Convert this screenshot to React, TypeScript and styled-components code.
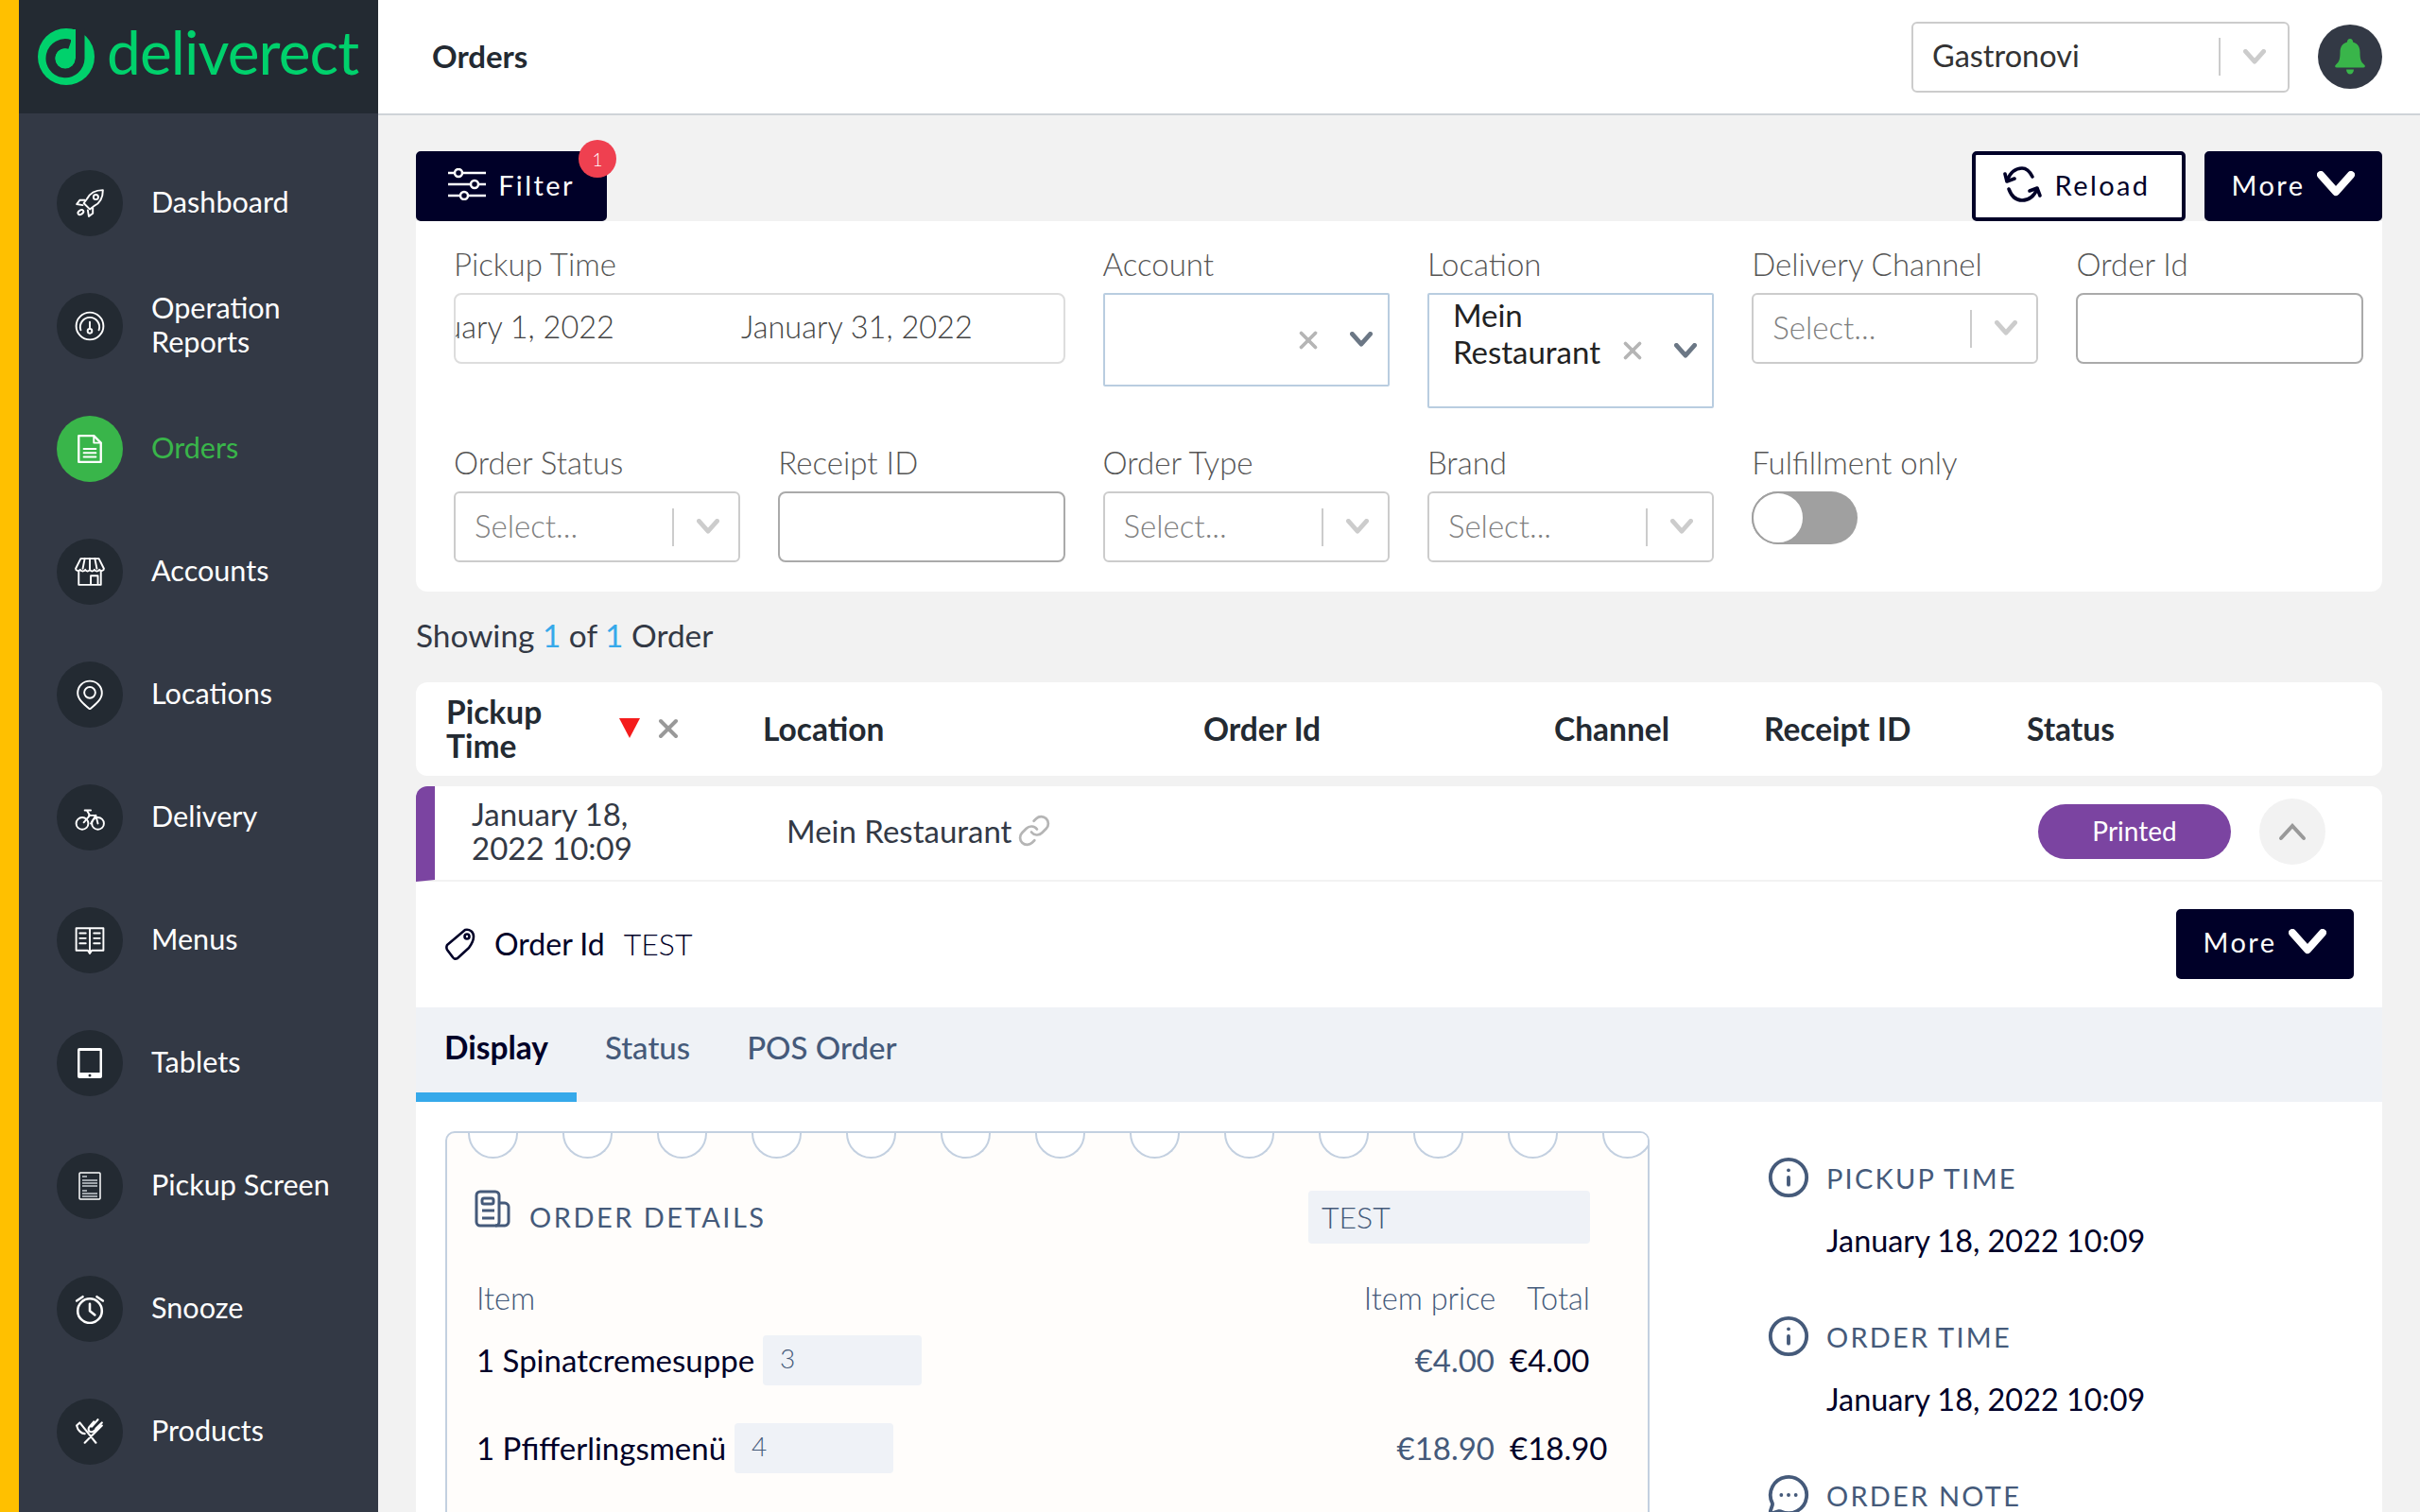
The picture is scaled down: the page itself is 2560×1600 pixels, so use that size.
import styled, { createGlobalStyle } from "styled-components";
import { Info, Link as LinkIcon, MessageCircleMore, X } from "lucide-react";

const GlobalStyle = createGlobalStyle`
  html, body {
    margin: 0;
    padding: 0;
    height: 100%;
    overflow: hidden;
    background: #f2f2f2;
    font-family: "Lato", "Noto Sans", sans-serif;
  }
  * {
    box-sizing: border-box;
  }
`;

const Shell = styled.div`
  display: flex;
  width: 2560px;
  height: 1600px;
  overflow: hidden;
`;

const Sidebar = styled.aside`
  width: 400px;
  flex-shrink: 0;
  background: #333945;
  border-left: 20px solid #ffc000;
`;

const LogoBar = styled.div`
  height: 120px;
  background: #232a32;
  display: flex;
  align-items: center;
  padding: 0 0 0 20px;
  gap: 13px;
`;

const LogoText = styled.span`
  font-size: 64px;
  line-height: 1;
  color: #00d16c;
  letter-spacing: -0.9px;
  margin-top: -10px;
`;

const Nav = styled.nav`
  display: flex;
  flex-direction: column;
  gap: 60px;
  padding: 60px 0 0 40px;
`;

const NavItem = styled.div<{ $active?: boolean }>`
  display: flex;
  align-items: center;
  gap: 30px;
  height: 70px;
  font-size: 30.6px;
  line-height: 36px;
  color: ${(props) => (props.$active ? "#39b54a" : "#ffffff")};
`;

const NavCircle = styled.div<{ $active?: boolean }>`
  width: 70px;
  height: 70px;
  border-radius: 50%;
  flex-shrink: 0;
  display: flex;
  align-items: center;
  justify-content: center;
  background: ${(props) => (props.$active ? "#39b54a" : "#232a32")};
`;

const NavLabel = styled.span`
  max-width: 200px;
  padding-bottom: 3px;
`;

const Main = styled.main`
  flex: 1;
  min-width: 0;
  display: flex;
  flex-direction: column;
`;

const TopBar = styled.header`
  height: 122px;
  flex-shrink: 0;
  background: #ffffff;
  border-bottom: 2px solid #cfd3d8;
  display: flex;
  align-items: center;
  padding: 0 40px 0 57px;
`;

const PageTitle = styled.h1`
  flex: 1;
  margin: 0 0 3px;
  font-size: 33px;
  font-weight: 700;
  color: #232a32;
`;

const AccountSelect = styled.div`
  width: 400px;
  height: 75px;
  border: 2px solid #cccccc;
  border-radius: 6px;
  background: #ffffff;
  display: flex;
  align-items: center;
  padding: 0 23px 0 20px;
  font-size: 32.5px;
  color: #333333;
  margin-right: 30px;
`;

const SelectText = styled.span<{ $muted?: boolean }>`
  flex: 1;
  min-width: 0;
  padding-bottom: 3px;
  color: ${(props) => (props.$muted ? "#808080" : "inherit")};
`;

const SelectDivider = styled.span`
  width: 2px;
  height: 40px;
  background: #cccccc;
  margin-right: 24px;
`;

const BellCircle = styled.div`
  width: 68px;
  height: 68px;
  border-radius: 50%;
  background: #333945;
  display: flex;
  align-items: center;
  justify-content: center;
`;

const Content = styled.div`
  padding: 38px 40px 0;
`;

const Toolbar = styled.div`
  display: flex;
  align-items: center;
  height: 74px;
  gap: 20px;
`;

const ToolButton = styled.button<{ $outline?: boolean; $width: number }>`
  width: ${(props) => props.$width}px;
  height: 74px;
  flex-shrink: 0;
  position: relative;
  display: flex;
  align-items: center;
  justify-content: center;
  gap: 13px;
  padding: ${(props) => (props.$outline ? "0 5px 4px 0" : "0 0 4px")};
  border-radius: 5px;
  border: 4px solid #000028;
  background: ${(props) => (props.$outline ? "#ffffff" : "#000028")};
  color: ${(props) => (props.$outline ? "#000028" : "#ffffff")};
  font-family: inherit;
  font-size: 29px;
  letter-spacing: 2.4px;
`;

const Spacer = styled.div`
  flex: 1;
`;

const Badge = styled.span`
  position: absolute;
  top: -16px;
  right: -14px;
  width: 40px;
  height: 40px;
  border-radius: 50%;
  background: #ef4050;
  color: #ffffff;
  font-size: 19px;
  font-weight: 300;
  letter-spacing: 0;
  display: flex;
  align-items: center;
  justify-content: center;
`;

const FilterPanel = styled.section`
  background: #ffffff;
  border-radius: 0 0 12px 12px;
  padding: 27px 21px 31px 40px;
  display: grid;
  grid-template-columns: repeat(6, 303.3px);
  column-gap: 40px;
  row-gap: 39px;
  align-items: start;
`;

const Field = styled.div<{ $wide?: boolean }>`
  grid-column: ${(props) => (props.$wide ? "span 2" : "span 1")};
`;

const FieldLabel = styled.div`
  height: 36px;
  margin-bottom: 13px;
  font-size: 33px;
  line-height: 36px;
  font-weight: 300;
  color: #555555;
  white-space: nowrap;
`;

const DateBox = styled.div`
  height: 75px;
  border: 2px solid #dddddd;
  border-radius: 8px;
  display: flex;
  align-items: center;
  overflow: hidden;
  font-size: 32.5px;
  font-weight: 300;
  color: #444444;
`;

const DateValue = styled.span`
  width: 302px;
  flex-shrink: 0;
  white-space: nowrap;
  padding-bottom: 4px;
  &:first-child {
    width: 360px;
    margin-left: -58px;
  }
`;

const SelectBox = styled.div<{ $height?: number; $focus?: boolean }>`
  height: ${(props) => props.$height ?? 75}px;
  border: 2px solid ${(props) => (props.$focus ? "#b9cde0" : "#cccccc")};
  border-radius: ${(props) => (props.$focus ? "2px" : "6px")};
  display: flex;
  align-items: center;
  padding: 0 ${(props) => (props.$focus ? "16px" : "20px")} 0 20px;
  font-size: 33px;
  font-weight: 300;
  color: #222222;
`;

const LocationText = styled.span`
  flex: 1;
  align-self: flex-start;
  padding: 2px 0 0 5px;
  line-height: 39px;
  font-weight: 400;
`;

const ClearMark = styled.span`
  display: flex;
  margin-right: 29px;
  color: #b5b5b5;
`;

const TextBox = styled.div`
  height: 75px;
  border: 2px solid #aaaaaa;
  border-radius: 8px;
`;

const Toggle = styled.div`
  width: 112px;
  height: 56px;
  border-radius: 28px;
  background: #a0a0a0;
  display: flex;
  align-items: center;
`;

const ToggleKnob = styled.div`
  width: 56px;
  height: 56px;
  border-radius: 50%;
  background: #ffffff;
  border: 2px solid #a0a0a0;
`;

const ResultCount = styled.div`
  margin: 28px 0 32px;
  font-size: 33.4px;
  line-height: 36px;
  color: #333945;
`;

const Highlight = styled.span`
  color: #36a9ea;
`;

const TableHead = styled.div`
  height: 99px;
  margin-bottom: 11px;
  padding: 0 0 2px 32px;
  background: #ffffff;
  border-radius: 12px;
  display: grid;
  grid-template-columns: 335px 466px 371px 222px 278px 1fr;
  align-items: center;
  font-size: 33.5px;
  line-height: 36px;
  font-weight: 700;
  color: #232a32;
`;

const SortCell = styled.div`
  display: flex;
  align-items: center;
`;

const SortTitle = styled.span`
  width: 183px;
  max-width: 140px;
  margin-right: 43px;
`;

const SortArrow = styled.span`
  width: 0;
  height: 0;
  border-left: 11px solid transparent;
  border-right: 11px solid transparent;
  border-top: 21px solid #f41c1c;
  margin-right: 14px;
`;

const OrderCard = styled.div`
  background: #ffffff;
  border-radius: 12px 12px 0 0;
  overflow: hidden;
  height: 900px;
`;

const OrderRow = styled.div`
  height: 101px;
  display: flex;
  align-items: center;
  border-left: 20px solid #7b44a1;
  border-bottom: 2px solid #f2f2f2;
  font-size: 33px;
  line-height: 36px;
  color: #333945;
`;

const DateCell = styled.div`
  width: 372px;
  padding: 0 120px 5px 39px;
`;

const LocationCell = styled.div`
  flex: 1;
  display: flex;
  align-items: center;
  gap: 6px;
  padding-bottom: 5px;
`;

const StatusPill = styled.div`
  width: 204px;
  height: 58px;
  border-radius: 29px;
  background: #7b44a1;
  color: #ffffff;
  font-size: 28px;
  padding-bottom: 3px;
  display: flex;
  align-items: center;
  justify-content: center;
  margin: 0 30px 3px 0;
`;

const ExpandButton = styled.div`
  width: 70px;
  height: 70px;
  border-radius: 50%;
  background: #f2f2f2;
  display: flex;
  align-items: center;
  justify-content: center;
  margin: 0 60px 3px 0;
`;

const OrderIdRow = styled.div`
  height: 133px;
  display: flex;
  align-items: center;
  padding: 0 30px 2px;
  font-size: 32px;
  color: #000028;
`;

const OrderIdLabel = styled.span`
  margin: 0 20px 0 19px;
`;

const OrderIdValue = styled.span`
  flex: 1;
  font-weight: 300;
`;

const Tabs = styled.div`
  height: 100px;
  display: flex;
  background: #eff2f6;
`;

const Tab = styled.div<{ $active?: boolean }>`
  padding: 0 30px;
  display: flex;
  align-items: center;
  font-size: ${(props) => (props.$active ? "33.5px" : "33px")};
  padding-bottom: ${(props) => (props.$active ? "6px" : "16px")};
  font-weight: ${(props) => (props.$active ? 700 : 500)};
  color: ${(props) => (props.$active ? "#000028" : "#455a7a")};
  border-bottom: ${(props) => (props.$active ? "10px solid #36a9ea" : "none")};
`;

const Details = styled.div`
  display: flex;
  padding: 31px 0 0 31px;
`;

const Receipt = styled.div`
  width: 1274px;
  height: 600px;
  flex-shrink: 0;
  background: #fffdfb;
  border: 2px solid #c3d0e0;
  border-radius: 10px 10px 0 0;
  overflow: hidden;
`;

const Scallops = styled.div`
  display: flex;
  gap: 47px;
  padding-left: 22px;
  margin-top: -2px;
`;

const Scallop = styled.span`
  width: 53px;
  height: 29px;
  flex-shrink: 0;
  background: #ffffff;
  border: 2px solid #c3d0e0;
  border-top: none;
  border-radius: 0 0 27px 27px;
`;

const ReceiptBody = styled.div`
  padding: 34px 61px 0 31px;
`;

const ReceiptHead = styled.div`
  display: flex;
  align-items: center;
  margin-bottom: 40px;
`;

const ReceiptIconSlot = styled.span`
  display: flex;
  margin: -18px 0 0 -2px;
`;

const ReceiptTitle = styled.span`
  flex: 1;
  margin: 0 0 2px 20px;
  font-size: 29px;
  font-weight: 400;
  letter-spacing: 2.5px;
  color: #455a7a;
`;

const ReceiptId = styled.div`
  width: 298px;
  height: 56px;
  background: #eff2f7;
  border-radius: 4px;
  padding: 0 14px;
  font-size: 32px;
  font-weight: 300;
  line-height: 56px;
  color: #455a7a;
`;

const ItemHead = styled.div`
  display: flex;
  gap: 33px;
  font-size: 32.5px;
  line-height: 36px;
  font-weight: 300;
  color: #455a7a;
  margin-bottom: 20px;
`;

const ItemHeadName = styled.span`
  flex: 1;
`;

const ItemRow = styled.div`
  display: flex;
  align-items: center;
  height: 54px;
  margin-bottom: 39px;
  font-size: 33px;
`;

const ItemName = styled.span`
  color: #000028;
  margin-right: 9px;
  white-space: nowrap;
`;

const ItemNote = styled.span`
  width: 168px;
  height: 53px;
  background: #eff2f7;
  border-radius: 4px;
  padding: 0 18px;
  font-size: 28px;
  font-weight: 300;
  line-height: 48px;
  color: #455a7a;
`;

const ItemPrice = styled.span`
  flex: 1;
  text-align: right;
  color: #455a7a;
  margin-right: 16px;
`;

const ItemTotal = styled.span`
  width: 85px;
  white-space: nowrap;
  color: #000028;
`;

const InfoColumn = styled.div`
  padding: 26px 0 0 124px;
`;

const InfoBlock = styled.div`
  margin-bottom: 60px;
`;

const InfoTitle = styled.div`
  display: flex;
  align-items: center;
  gap: 17px;
  height: 46px;
  font-size: 29px;
  letter-spacing: 2.2px;
  color: #455a7a;
`;

const InfoValue = styled.div`
  margin: 26px 0 0 63px;
  font-size: 32.4px;
  line-height: 36px;
  color: #000028;
`;

const LogoMark = () => (
  <svg width="60" height="60" viewBox="0 0 60 60">
    <circle cx="30" cy="30" r="30" fill="#00d16c" />
    <path
      d="M34 17A15.5 15.5 0 1 0 44.5 32V-2"
      fill="none"
      stroke="#232a32"
      strokeWidth="10"
    />
    <circle cx="29" cy="32" r="10.5" fill="#00d16c" />
    <path d="M35 1h5v31h-5z" fill="#00d16c" />
  </svg>
);

const Chevron = ({ color = "#cccccc", size = 24, weight = 4 }: { color?: string; size?: number; weight?: number }) => (
  <svg width={size} height={size * 0.7} viewBox="0 0 20 14" fill="none">
    <path d="M2 2l8 9 8-9" stroke={color} strokeWidth={weight} strokeLinecap="round" strokeLinejoin="round" />
  </svg>
);

const navIcon = {
  width: 32,
  height: 32,
  viewBox: "0 0 30 30",
  fill: "none",
  stroke: "#ffffff",
  strokeWidth: 1.8,
  strokeLinecap: "round" as const,
  strokeLinejoin: "round" as const,
};

const RocketIcon = () => (
  <svg {...navIcon}>
    <path d="M28 2c-7 0-13 3-16 9l-3 4 6 6 4-3c6-3 9-9 9-16z" />
    <circle cx="21" cy="9" r="2.4" />
    <path d="M10 12l-5 0-3 4 6 1M18 20v5l-4 3-1-6" />
    <ellipse cx="6" cy="24" rx="3" ry="2" transform="rotate(-35 6 24)" />
  </svg>
);

const GaugeIcon = () => (
  <svg {...navIcon}>
    <circle cx="15" cy="15" r="13.5" />
    <path d="M6 19a9.5 9.5 0 1 1 18 0M15 11v6" />
    <circle cx="15" cy="20" r="2.2" />
  </svg>
);

const DocIcon = () => (
  <svg {...navIcon}>
    <path d="M4 2h15l7 7v19H4z" strokeWidth="2.2" />
    <path d="M19 2v7h7M9 15h12M9 19h12M9 23h12" />
  </svg>
);

const StoreIcon = () => (
  <svg {...navIcon}>
    <path d="M6 2h18l5 10c0 2-3 3-4.5 1-1 2-4 2-5 0-1 2-3.5 2-4.5 0-1 2-3.5 2-4.5 0-1 2-4 2-5 0C4 15 1 14 1 12z" />
    <path d="M10 2l-2 10M15 2v10M20 2l2 10M4 15v13h22V15M16 28v-9h7v9" />
  </svg>
);

const PinIcon = () => (
  <svg {...navIcon}>
    <path d="M15 1.5c-6.5 0-12 5-12 12 0 6 6 11 12 16 6-5 12-10 12-16 0-7-5.5-12-12-12z" />
    <circle cx="15" cy="13" r="5.5" />
  </svg>
);

const BikeIcon = () => (
  <svg {...navIcon}>
    <circle cx="7.5" cy="21" r="6" />
    <circle cx="23" cy="21" r="6" />
    <path d="M10 8h6M12 8l3 5-6 7M14 13h7l2 8M21 13l-5 8" />
  </svg>
);

const BookIcon = () => (
  <svg {...navIcon}>
    <path d="M1.5 3h27v22H17l-2 3-2-3H1.5zM15 3v22" />
    <path d="M5 8h6M5 13h6M5 18h6M19 8h6M19 13h6M19 18h6" />
  </svg>
);

const TabletIcon = () => (
  <svg width="26" height="32" viewBox="0 0 26 32">
    <rect width="26" height="32" rx="2" fill="#ffffff" />
    <rect x="2.5" y="3" width="21" height="23" fill="#232a32" />
    <circle cx="13" cy="29" r="1.5" fill="#232a32" />
  </svg>
);

const ScreenIcon = () => (
  <svg width="24" height="30" viewBox="0 0 24 30" fill="none">
    <rect x="1" y="1" width="22" height="28" rx="1" stroke="#ffffff" strokeWidth="1.5" />
    <path d="M4 5h5M4 9h16M4 12h16M4 15h16M4 20h5M4 23h16M4 26h16" stroke="#c9ced4" strokeWidth="1.6" />
  </svg>
);

const AlarmIcon = () => (
  <svg {...navIcon} strokeWidth={2.4}>
    <circle cx="15" cy="17" r="12" />
    <path d="M15 10v7l5 4M2 7l6-4M28 7l-6-4" />
  </svg>
);

const CutleryIcon = () => (
  <svg {...navIcon}>
    <path d="M2 9l3-3 16 20M2 9c1 5 5 8 8 8M27 9l-17 17M19 5l-5 6c-1 3 1 5 4 4l7-5M23 3l-6 7M27 6l-6 6" strokeWidth="2" />
  </svg>
);

const BellIcon = () => (
  <svg width="34" height="38" viewBox="0 0 34 38">
    <path
      fill="#39b54a"
      d="M17 0c2 0 3 1.5 3 3.5 5 1.5 7.5 5 7.5 11 0 7 1 10 4.5 13 1.5 1 1 3-1 3H3c-2 0-2.5-2-1-3 3.5-3 4.5-6 4.5-13 0-6 2.5-9.5 7.5-11C14 1.5 15 0 17 0zM13 32.5h8c0 3-2 5-4 5s-4-2-4-5z"
    />
  </svg>
);

const SlidersIcon = () => (
  <svg width="40" height="34" viewBox="0 0 40 34" fill="none" stroke="#ffffff" strokeWidth="2.5">
    <path d="M0 5h7M15 5h25M0 17h24M32 17h8M0 29h13M21 29h19" />
    <circle cx="11" cy="5" r="4" />
    <circle cx="28" cy="17" r="4" />
    <circle cx="17" cy="29" r="4" />
  </svg>
);

const ReloadIcon = () => (
  <svg width="42" height="38" viewBox="0 0 42 38" fill="none" stroke="#000028" strokeWidth="3.6" strokeLinecap="round" strokeLinejoin="round">
    <path d="M31 11C28 5 24 2 20 2 12 2 7 8 4 15" />
    <path d="M2 8l2 8 8-3" />
    <path d="M6 24c3 8 8 12 14 12 8 0 13-5 16-12" />
    <path d="M39 31l-3-8-8 3" />
  </svg>
);

const TagIcon = () => (
  <svg width="34" height="34" viewBox="0 0 34 34" fill="none" stroke="#000028" strokeWidth="2.6" strokeLinejoin="round">
    <path d="M22 2c5-1 9 2 9 7 0 5-2 8-5 12L14 32c-2 1-4 1-5-1l-6-8c-1-2-1-3 0-5z" />
    <circle cx="24" cy="9" r="2.5" />
  </svg>
);

const ReceiptIcon = () => (
  <svg width="38" height="40" viewBox="0 0 38 40" fill="none" stroke="#455a7a" strokeWidth="3">
    <rect x="2" y="2" width="24" height="36" rx="4" />
    <rect x="8" y="9" width="12" height="6" rx="2" />
    <path d="M8 22h13M8 30h13M26 14h6c2 0 4 2 4 4v16c0 2-2 4-4 4H22" />
  </svg>
);

const navItems = [
  { label: "Dashboard", icon: <RocketIcon /> },
  { label: "Operation Reports", icon: <GaugeIcon /> },
  { label: "Orders", icon: <DocIcon />, active: true },
  { label: "Accounts", icon: <StoreIcon /> },
  { label: "Locations", icon: <PinIcon /> },
  { label: "Delivery", icon: <BikeIcon /> },
  { label: "Menus", icon: <BookIcon /> },
  { label: "Tablets", icon: <TabletIcon /> },
  { label: "Pickup Screen", icon: <ScreenIcon /> },
  { label: "Snooze", icon: <AlarmIcon /> },
  { label: "Products", icon: <CutleryIcon /> },
];

const scallops = Array.from({ length: 13 }, (_, i) => i);

const SelectField = ({ label }: { label: string }) => (
  <Field>
    <FieldLabel>{label}</FieldLabel>
    <SelectBox>
      <SelectText $muted>Select...</SelectText>
      <SelectDivider />
      <Chevron />
    </SelectBox>
  </Field>
);

function App() {
  return (
    <Shell>
      <GlobalStyle />
      <Sidebar>
        <LogoBar>
          <LogoMark />
          <LogoText>deliverect</LogoText>
        </LogoBar>
        <Nav>
          {navItems.map((item) => (
            <NavItem key={item.label} $active={item.active}>
              <NavCircle $active={item.active}>{item.icon}</NavCircle>
              <NavLabel>{item.label}</NavLabel>
            </NavItem>
          ))}
        </Nav>
      </Sidebar>
      <Main>
        <TopBar>
          <PageTitle>Orders</PageTitle>
          <AccountSelect>
            <SelectText>Gastronovi</SelectText>
            <SelectDivider />
            <Chevron />
          </AccountSelect>
          <BellCircle>
            <BellIcon />
          </BellCircle>
        </TopBar>
        <Content>
          <Toolbar>
            <ToolButton $width={202}>
              <SlidersIcon />
              Filter
              <Badge>1</Badge>
            </ToolButton>
            <Spacer />
            <ToolButton $outline $width={226}>
              <ReloadIcon />
              Reload
            </ToolButton>
            <ToolButton $width={188}>
              More
              <Chevron color="#ffffff" size={40} weight={4} />
            </ToolButton>
          </Toolbar>
          <FilterPanel>
            <Field $wide>
              <FieldLabel>Pickup Time</FieldLabel>
              <DateBox>
                <DateValue>January 1, 2022</DateValue>
                <DateValue>January 31, 2022</DateValue>
              </DateBox>
            </Field>
            <Field>
              <FieldLabel>Account</FieldLabel>
              <SelectBox $height={99} $focus>
                <SelectText />
                <ClearMark>
                  <X size={30} strokeWidth={3} />
                </ClearMark>
                <Chevron color="#6b7785" />
              </SelectBox>
            </Field>
            <Field>
              <FieldLabel>Location</FieldLabel>
              <SelectBox $height={122} $focus>
                <LocationText>Mein Restaurant</LocationText>
                <ClearMark>
                  <X size={30} strokeWidth={3} />
                </ClearMark>
                <Chevron color="#6b7785" />
              </SelectBox>
            </Field>
            <SelectField label="Delivery Channel" />
            <Field>
              <FieldLabel>Order Id</FieldLabel>
              <TextBox />
            </Field>
            <SelectField label="Order Status" />
            <Field>
              <FieldLabel>Receipt ID</FieldLabel>
              <TextBox />
            </Field>
            <SelectField label="Order Type" />
            <SelectField label="Brand" />
            <Field>
              <FieldLabel>Fulfillment only</FieldLabel>
              <Toggle>
                <ToggleKnob />
              </Toggle>
            </Field>
          </FilterPanel>
          <ResultCount>
            Showing <Highlight>1</Highlight> of <Highlight>1</Highlight> Order
          </ResultCount>
          <TableHead>
            <SortCell>
              <SortTitle>Pickup Time</SortTitle>
              <SortArrow />
              <X size={32} color="#999999" strokeWidth={3} />
            </SortCell>
            <span>Location</span>
            <span>Order Id</span>
            <span>Channel</span>
            <span>Receipt ID</span>
            <span>Status</span>
          </TableHead>
          <OrderCard>
            <OrderRow>
              <DateCell>January 18, 2022 10:09</DateCell>
              <LocationCell>
                Mein Restaurant
                <LinkIcon size={36} color="#b5b5b5" strokeWidth={1.8} />
              </LocationCell>
              <StatusPill>Printed</StatusPill>
              <ExpandButton>
                <svg width="30" height="20" viewBox="0 0 30 20" fill="none">
                  <path d="M3 17L15 4l12 13" stroke="#999999" strokeWidth="4" strokeLinecap="round" />
                </svg>
              </ExpandButton>
            </OrderRow>
            <OrderIdRow>
              <TagIcon />
              <OrderIdLabel>Order Id</OrderIdLabel>
              <OrderIdValue>TEST</OrderIdValue>
              <ToolButton $width={188}>
                More
                <Chevron color="#ffffff" size={40} weight={4} />
              </ToolButton>
            </OrderIdRow>
            <Tabs>
              <Tab $active>Display</Tab>
              <Tab>Status</Tab>
              <Tab>POS Order</Tab>
            </Tabs>
            <Details>
              <Receipt>
                <Scallops>
                  {scallops.map((i) => (
                    <Scallop key={i} />
                  ))}
                </Scallops>
                <ReceiptBody>
                  <ReceiptHead>
                    <ReceiptIconSlot>
                      <ReceiptIcon />
                    </ReceiptIconSlot>
                    <ReceiptTitle>ORDER DETAILS</ReceiptTitle>
                    <ReceiptId>TEST</ReceiptId>
                  </ReceiptHead>
                  <ItemHead>
                    <ItemHeadName>Item</ItemHeadName>
                    <span>Item price</span>
                    <span>Total</span>
                  </ItemHead>
                  <ItemRow>
                    <ItemName>1 Spinatcremesuppe</ItemName>
                    <ItemNote>3</ItemNote>
                    <ItemPrice>€4.00</ItemPrice>
                    <ItemTotal>€4.00</ItemTotal>
                  </ItemRow>
                  <ItemRow>
                    <ItemName>1 Pfifferlingsmenü</ItemName>
                    <ItemNote>4</ItemNote>
                    <ItemPrice>€18.90</ItemPrice>
                    <ItemTotal>€18.90</ItemTotal>
                  </ItemRow>
                </ReceiptBody>
              </Receipt>
              <InfoColumn>
                <InfoBlock>
                  <InfoTitle>
                    <Info size={46} strokeWidth={2} />
                    PICKUP TIME
                  </InfoTitle>
                  <InfoValue>January 18, 2022 10:09</InfoValue>
                </InfoBlock>
                <InfoBlock>
                  <InfoTitle>
                    <Info size={46} strokeWidth={2} />
                    ORDER TIME
                  </InfoTitle>
                  <InfoValue>January 18, 2022 10:09</InfoValue>
                </InfoBlock>
                <InfoBlock>
                  <InfoTitle>
                    <MessageCircleMore size={46} strokeWidth={2} />
                    ORDER NOTE
                  </InfoTitle>
                </InfoBlock>
              </InfoColumn>
            </Details>
          </OrderCard>
        </Content>
      </Main>
    </Shell>
  );
}

export default App;
